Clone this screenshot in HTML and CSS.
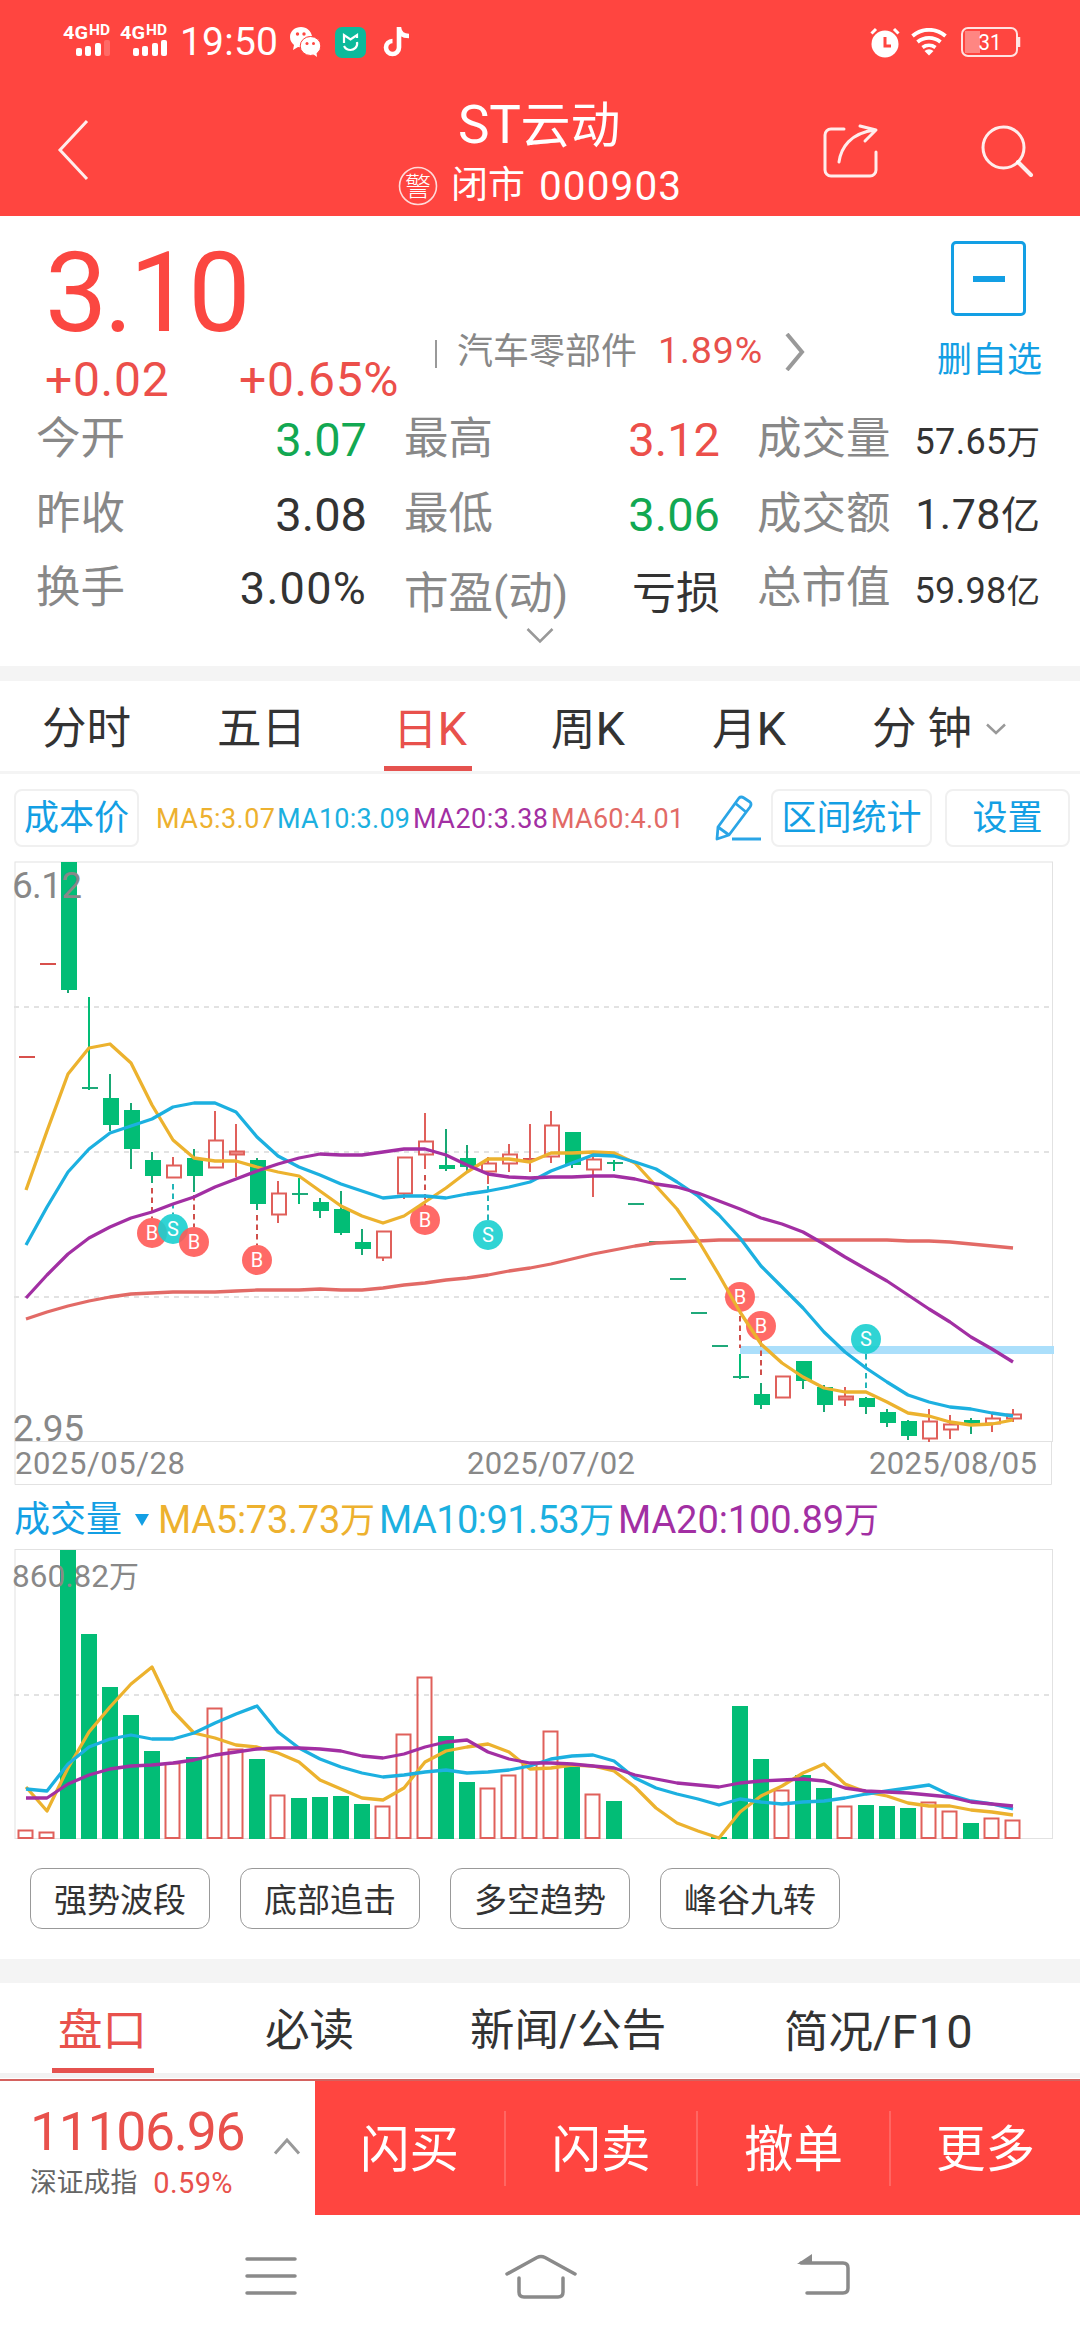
FILE: index.html
```html
<!DOCTYPE html>
<html lang="zh-CN">
<head>
<meta charset="utf-8">
<title>ST云动 000903</title>
<link rel="stylesheet" href="styles.css">
</head>
<body>
<div class="page">
  <header class="top">
    <div class="status">
      <svg class="sig" width="48" height="34" viewBox="0 0 48 34"><text x="0" y="16" font-size="19" textLength="25" lengthAdjust="spacingAndGlyphs">4G</text><text x="26" y="11.500" font-size="14" textLength="21" lengthAdjust="spacingAndGlyphs">HD</text><rect x="13" y="25" width="6" height="8" rx="2"/><rect x="22" y="23" width="6" height="10" rx="2"/><rect x="32" y="20" width="6" height="13" rx="2"/><rect x="41" y="17" width="6" height="16" rx="2" opacity=".2"/></svg>
      <svg class="sig" width="48" height="34" viewBox="0 0 48 34"><text x="0" y="16" font-size="19" textLength="25" lengthAdjust="spacingAndGlyphs">4G</text><text x="26" y="11.500" font-size="14" textLength="21" lengthAdjust="spacingAndGlyphs">HD</text><rect x="13" y="25" width="6" height="8" rx="2"/><rect x="22" y="23" width="6" height="10" rx="2"/><rect x="32" y="20" width="6" height="13" rx="2"/><rect x="41" y="17" width="6" height="16" rx="2"/></svg>
      <span class="clock">19:50</span>
      <svg class="wechat" width="31" height="30" viewBox="0 0 31 30"><path fill="#fff" d="M11 0C5 0 0 4 0 10c0 4 2 6 4 8l-1 5 5-3 4 .5C10 14 15 9 22 9 21 4 17 0 11 0z"/><ellipse cx="20.500" cy="19" rx="10.300" ry="9.500" fill="#fff" stroke="#ff4540" stroke-width="1"/><path fill="#fff" d="M23 27l4 3-.5-4.500z"/><g fill="#ff4540"><circle cx="7.500" cy="7" r="1.700"/><circle cx="14" cy="7" r="1.700"/><circle cx="17" cy="16.500" r="1.500"/><circle cx="23.500" cy="16.500" r="1.500"/></g></svg>
      <svg class="mi" width="31" height="31" viewBox="0 0 31 31"><rect width="31" height="31" rx="7" fill="#0cba9b"/><path d="M9 16V8l6.500 4.500L22 8v3M22 15c1 5-3 8-6.500 8S10 21 9 19" fill="none" stroke="#fff" stroke-width="2.200"/></svg>
      <svg class="tok" width="26" height="30" viewBox="0 0 26 30"><path d="M16 0v20.500a6.500 6.500 0 1 1-6.500-6.500M16 1c.5 5 4 8 10 8" fill="none" stroke="#fff" stroke-width="4.600"/></svg>
      <svg class="alarm" width="30" height="31" viewBox="0 0 30 31"><circle cx="15" cy="17" r="13.500" fill="#fff"/><path d="M1.500 6.500L6 2M28.500 6.500L24 2" stroke="#fff" stroke-width="3"/><path d="M15 10v9h6" fill="none" stroke="#ff4540" stroke-width="3"/></svg>
      <svg class="wifi" width="36" height="28" viewBox="0 0 36 28" fill="none" stroke="#fff" stroke-width="3.800"><path d="M1.500 8a25 25 0 0 1 33 0M6.500 14a18 18 0 0 1 23 0M11.500 19.500a11 11 0 0 1 13 0"/><path d="M18 27.500l-4.500-4.500a7 7 0 0 1 9 0z" fill="#fff" stroke="none"/></svg>
      <svg class="bat" width="60" height="30" viewBox="0 0 60 30"><rect x="1" y="1" width="55" height="28" rx="6" fill="none" stroke="#fff" stroke-opacity=".85" stroke-width="2"/><path d="M4 4h15v22H4z" fill="#fff" opacity=".35"/><path d="M58 10v10" stroke="#fff" stroke-opacity=".85" stroke-width="2.500"/><text x="17.500" y="23" font-size="22" textLength="23" lengthAdjust="spacingAndGlyphs">31</text></svg>
    </div>
    <div class="bar">
      <svg class="back" width="34" height="62" viewBox="0 0 34 62"><path d="M31 2L4 31l27 29" fill="none" stroke="#fff" stroke-opacity=".9" stroke-width="3"/></svg>
      <div class="titles">
        <h1 class="name"><span class="name-st">ST</span>云动</h1>
        <div class="sub"><svg width="40" height="40" viewBox="0 0 40 40"><circle cx="20" cy="20" r="18.500" fill="none" stroke="#fff" stroke-opacity=".8" stroke-width="1.600"/><text class="warn" x="20" y="29.500" text-anchor="middle" font-size="26">警</text></svg><span class="market">闭市</span><span class="code">000903</span></div>
      </div>
      <svg class="share" width="58" height="56" viewBox="0 0 58 56" fill="none" stroke="#fff" stroke-opacity=".9" stroke-width="3"><path d="M23 6H10a6 6 0 0 0-6 6v35a6 6 0 0 0 6 6h39a6 6 0 0 0 6-6V29" stroke-linecap="round"/><path d="M18 39C20 25 29 10 54 7M39 3l16 4-11 11" stroke-linecap="round" stroke-linejoin="round"/></svg>
      <svg class="search" width="54" height="54" viewBox="0 0 54 54" fill="none" stroke="#fff" stroke-opacity=".9" stroke-width="3"><circle cx="23.500" cy="23.500" r="20.500"/><path d="M38 38l13 13" stroke-width="4" stroke-linecap="round"/></svg>
    </div>
  </header>

  <section class="quote">
    <div class="head">
      <div class="price-col">
        <div class="price">3.10</div>
        <div class="chg"><span>+0.02</span><span>+0.65%</span></div>
      </div>
      <div class="sector">
        <i class="tick"></i><span class="sector-name">汽车零部件</span><span class="sector-pct">1.89%</span>
        <svg width="22" height="38" viewBox="0 0 22 38"><path d="M3 1l15 18L3 37" fill="none" stroke="#999" stroke-width="4"/></svg>
      </div>
      <div class="fav"><div class="fav-box"><i></i></div><span>删自选</span></div>
    </div>
    <div class="stats">
      <span class="k">今开</span><span class="v up-g">3.07</span>
      <span class="k">最高</span><span class="v up-r">3.12</span>
      <span class="k">成交量</span><span class="v s"><b>57.65</b>万</span>
      <span class="k">昨收</span><span class="v">3.08</span>
      <span class="k">最低</span><span class="v up-g">3.06</span>
      <span class="k">成交额</span><span class="v m"><b>1.78</b>亿</span>
      <span class="k">换手</span><span class="v p">3.00%</span>
      <span class="k low">市盈(动)</span><span class="v low c">亏损</span>
      <span class="k">总市值</span><span class="v s"><b>59.98</b>亿</span>
    </div>
    <svg class="more" width="28" height="18" viewBox="0 0 28 18"><path d="M1.500 2L14 14.500 26.500 2" fill="none" stroke="#999" stroke-width="2.500"/></svg>
  </section>

  <nav class="periods">
    <span>分时</span><span>五日</span><span class="on">日<b>K</b></span><span>周<b>K</b></span><span>月<b>K</b></span><span>分 钟</span>
    <svg width="20" height="12" viewBox="0 0 20 12"><path d="M1 1.500l9 8.500 9-8.500" fill="none" stroke="#999" stroke-width="2.500"/></svg>
  </nav>

  <div class="tools">
    <span class="btn cost">成本价</span>
    <svg class="legend" width="532" height="40" viewBox="154 0 532 40" font-size="27"><text class="t5" x="156" y="30" textLength="119">MA5:3.07</text><text class="t10" x="277" y="30" textLength="133">MA10:3.09</text><text class="t20" x="413" y="30" textLength="135">MA20:3.38</text><text class="t60" x="551" y="30" textLength="133">MA60:4.01</text></svg>
    <svg class="pencil" width="48" height="46" viewBox="0 0 48 46" fill="none" stroke="#2aa5e6" stroke-width="2.800" stroke-linejoin="round"><path d="M4 32L25 3q2-2 5 0l6 4q2 2 0 5L15 40 3 44zM4 32l11 8M21 8l11 9"/><path d="M18 44h29" stroke-width="3"/></svg>
    <span class="btn range">区间统计</span><span class="btn set">设置</span>
  </div>

  <svg id="kline" class="chart" width="1080" height="626" viewBox="0 860 1080 626"></svg>

  <div class="vol-head">
    <span>成交量</span><i></i>
    <svg width="730" height="50" viewBox="155 0 730 50" font-size="38"><text class="t5" x="159" y="38" textLength="217">MA5:73.73<tspan font-size="35">万</tspan></text><text class="t10" x="380" y="38" textLength="235">MA10:91.53<tspan font-size="35">万</tspan></text><text class="t20" x="619" y="38" textLength="261">MA20:100.89<tspan font-size="35">万</tspan></text></svg>
  </div>

  <svg id="volume" class="chart" width="1080" height="292" viewBox="0 1548 1080 292"></svg>

  <div class="pills"><span>强势波段</span><span>底部追击</span><span>多空趋势</span><span>峰谷九转</span></div>

  <nav class="info"><span class="on">盘口</span><span>必读</span><span>新闻/公告</span><span>简况/<b>F10</b></span></nav>

  <footer class="dock">
    <div class="index">
      <div><div class="idx-val">11106.96</div><div class="idx-sub"><span>深证成指</span><b>0.59%</b></div></div>
      <svg width="28" height="18" viewBox="0 0 28 18"><path d="M2 16.500L14 3l12 13.500" fill="none" stroke="#999" stroke-width="3"/></svg>
    </div>
    <div class="acts"><span>闪买</span><span>闪卖</span><span>撤单</span><span>更多</span></div>
  </footer>

  <div class="sysnav">
    <svg width="52" height="44" viewBox="0 0 52 44"><path d="M2 5h48M2 22h48M2 39h48"/></svg>
    <svg width="72" height="46" viewBox="0 0 72 46"><path d="M2 20L32 3.500q4-2 8 0L70 20M14 24v14q0 5 5 5h34q5 0 5-5V24"/></svg>
    <svg width="54" height="44" viewBox="0 0 54 44"><path d="M4 9h42q5 0 5 5v20q0 5-5 5H10"/><path class="solid" d="M0 10L15 0v10z"/></svg>
  </div>
</div>
<script src="chart.js"></script>
</body>
</html>
```
FILE: styles.css
```css
* { box-sizing: border-box; }
body { margin: 0; background: #fff; color: #333; font-family: Roboto, "Noto Sans CJK SC", sans-serif; }
b, h1 { font-weight: 400; margin: 0; }
i { display: block; }
svg { display: block; flex: none; }
.page { width: 1080px; height: 2340px; overflow: hidden; display: flex; flex-direction: column; }
.page > * { flex: none; }

.top { height: 216px; background: #ff4540; color: #fff; }
.top text { fill: #fff; }
.top .warn { font-weight: 300; }
.status { height: 84px; display: flex; align-items: center; padding-left: 63px; }
.sig { margin-right: 9px; margin-top: -4px; fill: #fff; }
.sig text { font-weight: 700; }
.clock { font-size: 39px; line-height: 84px; width: 113px; letter-spacing: 0.2px; padding-left: 3px; }
.mi { margin-left: 14px; }
.tok { margin-left: 17px; }
.alarm { margin-left: 461px; }
.wifi { margin-left: 11px; }
.bat { margin-left: 14px; }
.bar { height: 132px; display: grid; grid-template-columns: 56px 270px 495px 157px 102px; }
.back { grid-column: 2; margin-top: 35px; }
.titles { padding-left: 72px; }
.name { font-size: 50px; line-height: 60px; margin-top: 11px; padding-left: 60px; }
.name-st { font-size: 53px; letter-spacing: -0.3px; }
.sub { display: flex; align-items: center; height: 50px; margin-top: 5px; font-size: 37px; line-height: 50px; }
.market { margin-left: 13px; }
.code { font-size: 40.5px; letter-spacing: 1.1px; margin-left: 14px; }
.share { margin-top: 39px; }
.search { margin-top: 40px; margin-left: 2px; }

.quote { height: 450px; }
.head { height: 185px; display: grid; grid-template-columns: 434px 503px 143px; }
.price-col { padding-left: 45px; color: #fb4741; }
.price { font-size: 111px; line-height: 112px; margin-top: 21px; letter-spacing: -3.6px; }
.chg { display: flex; height: 50px; margin-top: 6px; font-size: 48px; line-height: 50px; letter-spacing: 0.7px; color: #ec4f4a; }
.chg span:first-child { width: 194px; }
.sector { display: flex; align-items: center; height: 50px; margin-top: 111px; }
.tick { width: 2px; height: 28px; background: #999; margin: 4px 20px 0 1px; }
.sector-name { font-size: 36px; line-height: 50px; color: #888; width: 201px; }
.sector-pct { font-size: 37.5px; line-height: 46px; color: #e8514c; width: 126px; letter-spacing: 0.9px; margin-top: -4px; }
.fav { color: #139fe4; font-size: 35px; line-height: 50px; }
.fav-box { width: 75px; height: 75px; margin: 25px 0 20px 14px; border: 3px solid #139fe4; border-radius: 5px; display: grid; place-items: center; }
.fav-box i { width: 32px; height: 6px; background: #139fe4; }
.stats { display: grid; grid-template-columns: 140px 191px 178px 175px 178px 142px; grid-auto-rows: 74.5px; height: 225px; padding-left: 36px; line-height: 77px; }
.k { font-size: 44.5px; color: #888; white-space: nowrap; }
.k:nth-child(6n+3), .k:nth-child(6n+5) { padding-left: 37px; }
.v { font-size: 47px; text-align: right; white-space: nowrap; }
.v.p { font-size: 45px; letter-spacing: 1.3px; }
.v.c { font-size: 44px; }
.v.s { font-size: 33.5px; padding-top: 3px; }
.v.s b { font-size: 36px; letter-spacing: 0.3px; }
.v.m { font-size: 39px; }
.v.m b { font-size: 43px; letter-spacing: 0.5px; }
.low { padding-top: 6px; }
.up-g { color: #12a852; }
.up-r { color: #ec4f4a; }
.more { margin: 1px 0 0 526px; }

.periods { height: 108px; border-top: 15px solid #f4f4f4; border-bottom: 3px solid #f4f4f4; display: grid; grid-template-rows: 90px; grid-template-columns: 175px 166px 168px 161px 160px 114px 30px; padding-left: 42px; font-size: 44.5px; line-height: 96px; }
.periods span { position: relative; white-space: nowrap; }
.periods b { font-size: 47px; }
.periods svg { margin-top: 42px; }
.periods .on, .info .on { color: #e8514c; }
.periods .on::after, .info .on::after { content: ""; position: absolute; left: 1px; bottom: 0; width: 88px; height: 5px; background: #e5524f; }
.periods .on { padding-left: 10px; }

.tools { height: 86px; display: flex; align-items: center; padding: 2px 0 0 14px; color: #139fe4; font-size: 35px; }
.btn { height: 58px; border: 2px solid #f0f0f0; border-radius: 8px; display: grid; place-items: center; line-height: 50px; padding-top: 2px; }
.cost { width: 125px; }
.legend { margin-left: 15px; }
.pencil { margin-left: 28px; }
.range { width: 161px; margin-left: 9px; }
.set { width: 125px; margin-left: 13px; }
.t5 { fill: #edb12f; }
.t10 { fill: #1cb0e0; }
.t20 { fill: #a22fa3; }
.t60 { fill: #e26a66; }
.chart text { fill: #888; }
.chart .mark { fill: #fff; font-size: 20px; text-anchor: middle; }

.vol-head { height: 62px; display: flex; align-items: center; padding: 5px 0 0 14px; color: #139fe4; font-size: 36px; line-height: 52px; }
.vol-head i { border: 7.5px solid transparent; border-top: 12px solid #139fe4; border-bottom: 0; margin-left: 13px; }
.vol-head svg { margin-left: 5px; }

.pills { height: 119px; display: flex; gap: 30px; padding: 28px 0 0 30px; }
.pills span { width: 180px; height: 61px; border: 1.5px solid #999; border-radius: 12px; text-align: center; font-size: 33px; line-height: 64px; }

.info { height: 119px; border-top: 24px solid #f4f4f4; border-bottom: 5px solid #f2f2f2; display: grid; grid-template-rows: 90px; grid-template-columns: 207px 205px 314px 260px; padding-left: 58px; font-size: 44.5px; line-height: 97px; }
.info span { position: relative; white-space: nowrap; }
.info b { font-size: 47px; letter-spacing: 1.2px; }
.info .on::after { left: -6px; width: 102px; }

.dock { height: 136px; margin-top: 1px; border-top: 2px solid #d4625f; display: flex; }
.index { width: 315px; display: flex; padding-left: 30px; }
.index > div { width: 243px; }
.index svg { margin-top: 56px; }
.idx-val { font-size: 53.5px; line-height: 60px; margin-top: 21px; color: #e8514c; letter-spacing: -1.3px; }
.idx-sub { display: flex; font-size: 26.8px; line-height: 42px; color: #666; }
.idx-sub b { font-size: 29px; color: #e8514c; margin-left: 16px; letter-spacing: 0.4px; }
.acts { width: 765px; background: #ff4540; color: #fff; display: grid; grid-template-columns: 191px 192px 193px 189px; align-items: center; }
.acts span { height: 75px; line-height: 79px; font-size: 49.5px; text-align: center; border-right: 2px solid #ff6662; }
.acts span:last-child { border: 0; }

.sysnav { height: 125px; display: grid; grid-template-columns: 260px 292px 60px; padding: 39px 0 0 245px; }
.sysnav path { fill: none; stroke: #8a8a8a; stroke-width: 3.5px; stroke-linecap: round; }
.sysnav .solid { fill: #8a8a8a; stroke: none; }
```
FILE: chart.js
```js
var GREEN = '#02bd76', RED = '#e0605b', GRID = '#e2e2e2';
function cx(i) { return 26 + 21 * i; }
function line(x1, y1, x2, y2, c, w, dash) {
  return '<line x1="' + x1 + '" y1="' + y1 + '" x2="' + x2 + '" y2="' + y2 + '" stroke="' + c + '" stroke-width="' + w + '"' + (dash ? ' stroke-dasharray="' + dash + '"' : '') + '/>';
}
function box(x, y, w, h, fill, stroke) {
  return '<rect x="' + x + '" y="' + y + '" width="' + w + '" height="' + h + '" fill="' + fill + '"' + (stroke ? ' stroke="' + stroke + '" stroke-width="2"' : '') + '/>';
}
function curve(a, c) {
  return '<polyline fill="none" stroke-width="3.3" stroke-linejoin="round" stroke="' + c + '" points="' + a.map(function (y, i) { return cx(i) + ',' + y; }).join(' ') + '"/>';
}
function label(x, y, size, len, t) {
  return '<text x="' + x + '" y="' + y + '" font-size="' + size + '" textLength="' + len + '">' + t + '</text>';
}

/* colour, high, body top, body bottom, low */
var candles = [
  ['r',1057,1057,1057,1057],['r',964,964,964,964],['g',862,862,990,993],['g',997,1088,1088,1090],['g',1074,1098,1125,1131],['g',1103,1110,1149,1169],
  ['g',1152,1160,1176,1183],['r',1157,1165,1178,1178],['g',1149,1158,1176,1192],['r',1111,1140,1168,1168],['r',1124,1151,1155,1177],['g',1158,1160,1204,1210],
  ['r',1181,1193,1215,1223],['g',1178,1194,1194,1204],['g',1198,1202,1211,1218],['g',1191,1209,1233,1235],['g',1229,1242,1249,1255],['r',1231,1231,1258,1261],
  ['r',1157,1157,1194,1199],['r',1113,1141,1155,1169],['g',1129,1165,1169,1171],['g',1145,1158,1167,1171],['r',1157,1163,1172,1184],['r',1144,1154,1164,1172],
  ['r',1124,1159,1159,1172],['r',1111,1125,1157,1163],['g',1132,1132,1165,1168],['r',1155,1159,1170,1197],['g',1160,1163,1163,1171],['g',1204,1204,1204,1204],
  ['g',1242,1242,1242,1242],['g',1279,1279,1279,1279],['g',1313,1313,1313,1313],['g',1346,1346,1346,1346],['g',1354,1377,1377,1379],['g',1383,1394,1405,1409],
  ['r',1376,1376,1398,1398],['g',1361,1361,1381,1389],['g',1385,1387,1405,1412],['r',1387,1396,1400,1406],['g',1397,1398,1407,1414],['g',1409,1412,1423,1427],
  ['g',1420,1421,1436,1440],['r',1409,1421,1439,1442],['r',1415,1424,1430,1439],['g',1418,1420,1424,1434],['r',1413,1418,1424,1432],['r',1409,1414,1419,1422]
];
var ma5 = [1190,1131,1074,1048,1044,1063,1105,1140,1158,1161,1161,1167,1172,1176,1191,1206,1216,1223,1216,1202,1188,1172,1159,1159,1162,1153,1153,1152,1153,1163,1186,1209,1240,1275,1312,1344,1363,1377,1388,1392,1392,1402,1413,1416,1422,1425,1424,1420];
var ma10 = [1245,1207,1172,1149,1133,1126,1119,1107,1103,1103,1112,1137,1156,1167,1175,1184,1191,1198,1196,1196,1198,1194,1191,1187,1182,1171,1163,1155,1156,1162,1169,1182,1196,1215,1238,1266,1287,1308,1332,1352,1368,1382,1395,1402,1407,1409,1413,1416];
var ma20 = [1298,1275,1254,1238,1227,1218,1212,1204,1197,1187,1179,1171,1164,1158,1154,1155,1155,1152,1149,1149,1155,1165,1174,1177,1178,1177,1177,1176,1176,1179,1184,1187,1193,1201,1209,1218,1224,1232,1244,1257,1269,1281,1295,1309,1322,1337,1349,1362];
var ma60 = [1319,1312,1306,1301,1297,1294,1293,1292,1292,1292,1291,1290,1290,1290,1289,1290,1290,1288,1285,1283,1280,1278,1275,1271,1268,1264,1259,1254,1250,1246,1243,1242,1241,1240,1240,1240,1240,1240,1240,1240,1240,1240,1241,1241,1242,1244,1246,1248];
/* letter, candle index, badge y, leader start, leader end */
var marks = [['B',6,1233,1188,1218],['S',7,1229,1184,1214],['B',8,1242,1195,1227],['B',11,1260,1215,1245],['B',19,1220,1175,1206],['S',22,1235,1186,1221],['B',34,1297,1316,1348],['B',35,1326,1341,1377],['S',40,1339,1354,1393]];

var s = '<rect x="15" y="862" width="1037.500" height="579.500" fill="none" stroke="' + GRID + '"/><path d="M15 1441v43.500h1036.500V1441" fill="none" stroke="' + GRID + '"/>';
[1007, 1152, 1297].forEach(function (y) { s += line(14, y, 1050, y, GRID, 2, '5 5'); });
candles.forEach(function (c, i) {
  var x = cx(i), col = c[0] === 'g' ? GREEN : RED;
  if (c[2] === c[3]) {
    s += line(x - 7, c[2], x + 9, c[2], c[0] === 'g' ? '#1fa97a' : '#d8504c', 2);
    if (c[1] !== c[4]) s += line(x, c[1], x, c[4], col, 2);
  } else {
    if (c[0] === 'g') {
      s += line(x, c[1], x, c[4], '#18a874', 2) + box(x - 7, c[2], 16, c[3] - c[2], GREEN);
    } else {
      s += line(x, c[1], x, c[2], RED, 2) + line(x, c[3], x, c[4], RED, 2) + box(x - 6, c[2] + .5, 14, c[3] - c[2] - 1, c[3] - c[2] < 5 ? '#f5a19d' : 'none', RED);
    }
  }
});
s += '<rect x="740" y="1346" width="314" height="8" fill="#abdffb"/>';
marks.forEach(function (m) {
  var x = cx(m[1]), b = m[0] === 'B';
  s += line(x, m[3], x, m[4], b ? '#cf4f4b' : '#22b5b8', 2, '5.500 4');
  s += '<circle cx="' + x + '" cy="' + m[2] + '" r="15" fill="' + (b ? '#ff5a56' : '#19cfcf') + '" fill-opacity=".9"/><text class="mark" x="' + x + '" y="' + (m[2] + 7) + '">' + m[0] + '</text>';
});
s += curve(ma60, '#e26a66') + curve(ma5, '#ecb22e') + curve(ma10, '#1cb0e0') + curve(ma20, '#a22fa3');
s += label(12, 898, 37, 70, '6.12') + label(13, 1441, 37, 71, '2.95');
s += label(15, 1474, 31, 170, '2025/05/28') + label(467, 1474, 31, 168, '2025/07/02') + label(869, 1474, 31, 168, '2025/08/05');
document.getElementById('kline').innerHTML = s;

/* bar tops; a negative value is a hollow red bar, 0 is no trade */
var vols = [-1830,-1832,1550,1634,1687,1715,1751,-1763,1757,-1708,-1749,1759,-1795,1798,1797,1796,1804,-1806,-1734,-1677,1736,1782,-1788,-1775,-1763,-1731,1766,-1794,1801,0,0,0,0,1837,1706,1759,-1790,1775,1788,-1806,1805,1806,1808,-1802,-1811,1823,-1818,-1820];
var v5 = [1787,1811,1768,1732,1707,1684,1667,1711,1733,1738,1745,1747,1753,1762,1780,1789,1798,1800,1788,1762,1751,1747,1744,1752,1769,1768,1765,1766,1771,1787,1808,1823,1831,1838,1812,1796,1786,1773,1764,1784,1792,1796,1803,1806,1806,1810,1812,1815];
var v10 = [1789,1791,1764,1747,1739,1735,1739,1739,1733,1723,1714,1706,1732,1748,1759,1767,1773,1777,1775,1772,1770,1773,1772,1770,1766,1759,1756,1755,1761,1778,1788,1794,1799,1805,1799,1802,1804,1802,1801,1798,1794,1791,1788,1785,1795,1801,1804,1809];
var v20 = [1798,1798,1784,1775,1769,1766,1765,1763,1760,1755,1752,1749,1748,1748,1749,1751,1756,1758,1754,1747,1742,1740,1752,1759,1763,1763,1764,1766,1768,1775,1779,1783,1785,1787,1783,1781,1780,1779,1781,1788,1791,1792,1793,1795,1797,1802,1804,1806];
s = '<rect x="15" y="1549.500" width="1037.500" height="289" fill="none" stroke="' + GRID + '"/>' + line(14, 1695, 1050, 1695, GRID, 2, '5 5');
vols.forEach(function (v, i) {
  var x = cx(i);
  if (v > 0) s += box(x - 8, v, 16, 1839 - v, GREEN);
  if (v < 0) s += box(x - 7.5, -v + .5, 14, 1838 + v - .5, 'none', RED);
});
s += curve(v5, '#ecb22e') + curve(v10, '#1cb0e0') + curve(v20, '#a22fa3');
s += label(12, 1586.5, 31.5, 127, '860.82<tspan font-size="30">万</tspan>');
document.getElementById('volume').innerHTML = s;
```
